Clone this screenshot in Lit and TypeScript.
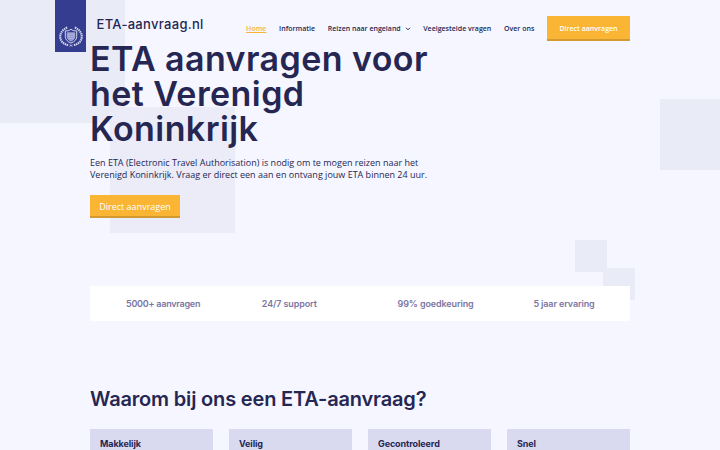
import { css, html, LitElement } from "lit";
import { customElement } from "lit/decorators.js";

@customElement("site-header")
class SiteHeader extends LitElement {
  render() {
    return html`
      <div class="banner">
        <svg class="crest" viewBox="0 0 24 21" fill="none" stroke="#d3d6ee">
          <path d="M8.2 1.6C3 3.6.6 8 1.4 12.2c.6 3.4 3.4 6 8.2 7" stroke-width="2.1" stroke-dasharray="1.5 .6"/>
          <path d="M15.8 1.6c5.2 2 7.6 6.4 6.8 10.6-.6 3.4-3.4 6-8.2 7" stroke-width="2.1" stroke-dasharray="1.5 .6"/>
          <path d="M10.5 20.4l3-1.7M13.5 20.4l-3-1.7" stroke-width=".7"/>
          <path d="M6.3 4.9c2.3.2 4.2-.4 5.7-1.7 1.5 1.3 3.4 1.9 5.7 1.7v5.6c0 3.1-2.1 5.2-5.7 6.5-3.6-1.3-5.7-3.4-5.7-6.5z" stroke-width="1"/>
          <path d="M8.2 6.7h7.6v4c0 2-1.4 3.3-3.8 4.3-2.4-1-3.8-2.3-3.8-4.3z" fill="#8f96cf" stroke-width=".5"/>
          <path d="M8.5 8.3h7M8.5 10.4h7M9.5 12.4h5" stroke-width=".5"/>
        </svg>
      </div>
      <span class="brand">ETA-aanvraag.nl</span>
      <nav>
        <a class="active">Home</a>
        <a>Informatie</a>
        <a>Reizen naar engeland
          <svg class="chevron" viewBox="0 0 6 4" fill="none" stroke="currentColor"><path d="M1 .8l2 2 2-2"/></svg>
        </a>
        <a>Veelgestelde vragen</a>
        <a>Over ons</a>
        <a class="cta">Direct aanvragen</a>
      </nav>
    `
  }

  static styles = css`
    :host {
      display: flex;
      align-items: flex-start;
      height: 41px;
      padding: 0 90px 0 55px;
      font-family: "Open Sans", sans-serif;
      color: #262653;
      white-space: nowrap;
    }
    .banner {
      width: 31px;
      height: 52px;
      flex: none;
      background: #343d90;
      display: flex;
      justify-content: center;
    }
    .crest {
      width: 24px;
      height: 21px;
      margin-top: 25.5px;
    }
    .brand {
      margin: 15px 0 0 10.5px;
      font: 500 13px/18px Inter, sans-serif;
      letter-spacing: 0.3px;
    }
    nav {
      margin-left: auto;
      padding-top: 16px;
      display: flex;
      align-items: center;
      gap: 12.7px;
      font-size: 7px;
      font-weight: 600;
      line-height: 10px;
      letter-spacing: 0.01px;
    }
    .active {
      color: #f7b538;
      text-decoration: underline;
    }
    .chevron {
      width: 6px;
      height: 4px;
      margin-left: 2px;
    }
    .cta {
      box-sizing: border-box;
      width: 83px;
      height: 25px;
      border-bottom: 2px solid #d39a2f;
      background: #f9b533;
      color: #fff;
      line-height: 25px;
      text-align: center;
    }
  `;
}

@customElement("hero-section")
class HeroSection extends LitElement {
  render() {
    return html`
      <h1>ETA aanvragen voor<br>het Verenigd<br>Koninkrijk</h1>
      <p>Een ETA (Electronic Travel Authorisation) is nodig om te mogen reizen naar het<br>Verenigd Koninkrijk. Vraag er direct een aan en ontvang jouw ETA binnen 24 uur.</p>
      <a class="button">Direct aanvragen</a>
    `
  }

  static styles = css`
    :host {
      display: block;
      height: 244.6px;
      padding: 0 90px;
      color: #262653;
    }
    h1 {
      margin: 0;
      font: 600 34px/35px Inter, sans-serif;
      letter-spacing: 0.42px;
      white-space: nowrap;
    }
    p {
      margin: 11px 0 14px;
      font: 400 9px/12px "Open Sans", sans-serif;
      white-space: nowrap;
    }
    .button {
      display: block;
      box-sizing: border-box;
      width: 90px;
      height: 23px;
      border-bottom: 2px solid #d39a2f;
      background: #f9b533;
      color: #fff;
      font: 400 9px/23px "Open Sans", sans-serif;
      text-align: center;
    }
  `;
}

@customElement("app-root")
class AppRoot extends LitElement {
  stats = ["5000+ aanvragen", "24/7 support", "99% goedkeuring", "5 jaar ervaring"];
  cards = ["Makkelijk", "Veilig", "Gecontroleerd", "Snel"];

  render() {
    return html`
      <i class="square top-left"></i>
      <i class="square middle"></i>
      <i class="square right"></i>
      <i class="square small"></i>
      <i class="square small lower"></i>
      <div class="page">
        <site-header></site-header>
        <hero-section></hero-section>
        <div class="stats">
          ${this.stats.map(stat => html`<span class="stat">${stat}</span>`)}
        </div>
        <h2>Waarom bij ons een ETA-aanvraag?</h2>
        <div class="cards">
          ${this.cards.map(card => html`<div class="card"><h3>${card}</h3></div>`)}
        </div>
      </div>
    `
  }

  static styles = css`
    :host {
      display: block;
      position: relative;
      height: 450px;
      overflow: hidden;
      background: #f5f6ff;
      color: #262653;
    }
    .square {
      position: absolute;
      background: #e9ebf6;
    }
    .top-left {
      left: 0;
      top: 0;
      width: 125px;
      height: 123px;
    }
    .middle {
      left: 110px;
      top: 107px;
      width: 125px;
      height: 126px;
      background: #ebecf7;
    }
    .right {
      left: 660.4px;
      top: 99px;
      width: 60px;
      height: 71px;
    }
    .small {
      left: 575px;
      top: 240.4px;
      width: 32px;
      height: 32px;
    }
    .lower {
      left: 603px;
      top: 268px;
    }
    .page {
      position: relative;
    }
    .stats {
      margin: 0 90px;
      height: 35px;
      display: grid;
      grid-template-columns: repeat(4, 135.8px);
      align-items: center;
      box-sizing: border-box;
      padding: 2px 0 0 36px;
      overflow: hidden;
      background: #fff;
    }
    .stat {
      font: 600 9px/12px Inter, sans-serif;
      letter-spacing: -0.12px;
      color: #7b76a3;
      white-space: nowrap;
    }
    .stat:first-child {
      letter-spacing: -0.25px;
    }
    h2 {
      margin: 65px 90px 17.4px;
      font: 600 20px/26px Inter, sans-serif;
      letter-spacing: -0.17px;
      white-space: nowrap;
    }
    .cards {
      display: grid;
      grid-template-columns: repeat(4, 1fr);
      gap: 16px;
      margin: 0 90px;
    }
    .card {
      height: 60px;
      padding: 9px 10px;
      background: #d9daef;
    }
    h3 {
      margin: 0;
      font: 700 9px/12px Inter, sans-serif;
      letter-spacing: -0.1px;
    }
  `;
}
